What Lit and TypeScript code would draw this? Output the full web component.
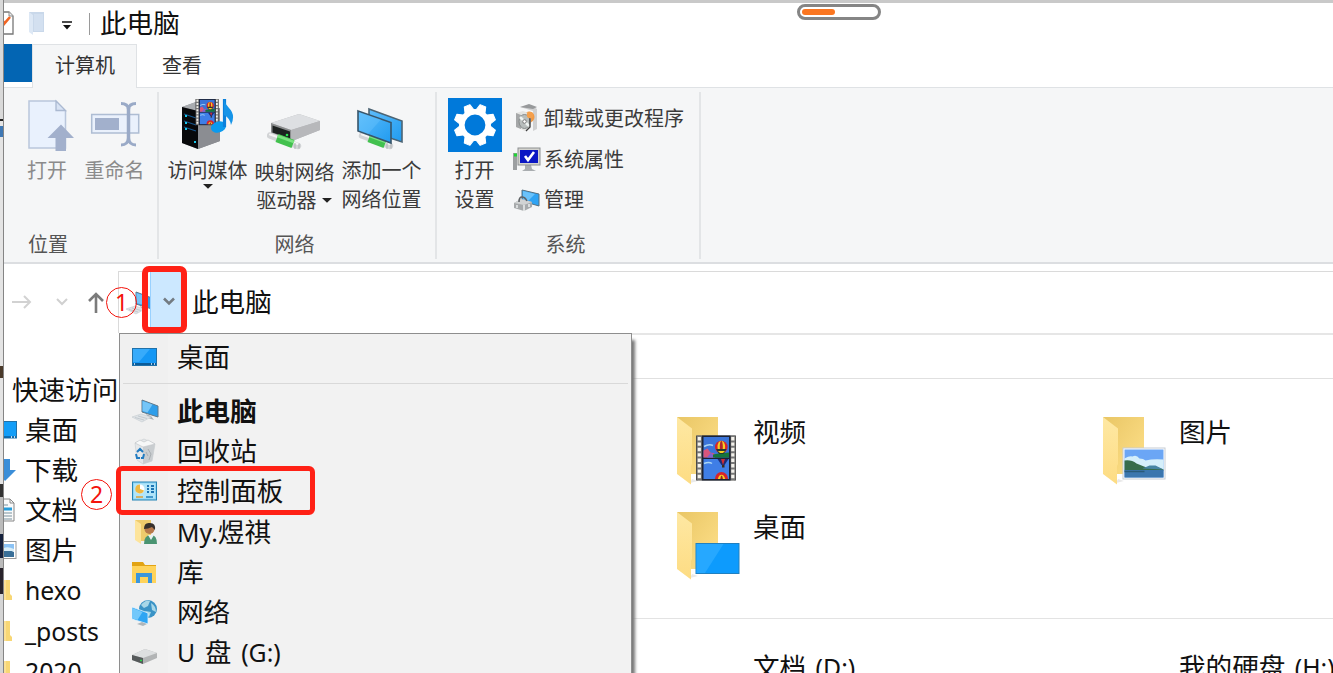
import { LitElement, html, css, svg, nothing } from "lit";
import { customElement, property } from "lit/decorators.js";

type Drawing = { w: number; h: number; art: unknown };

const film = (x: number, y: number, s: number) => svg`
  <g transform="translate(${x} ${y}) scale(${s})">
    <rect width="40" height="45" fill="#4b4b4b"/>
    <rect x="1" y="0" width="4.6" height="45" fill="#777"/><rect x="34.6" y="0" width="4.6" height="45" fill="#777"/>
    <path d="M3.3 1.5V45M36.8 1.5V45" stroke="#f4f2ec" stroke-width="3.2" stroke-dasharray="3.4 2"/>
    <rect x="6" y="0" width="28.500" height="45" fill="#1c2233"/>
    <rect x="7.500" y="1.500" width="25.500" height="20.500" fill="#3b74d8"/>
    <rect x="7.500" y="23.500" width="25.500" height="20" fill="#3f7ee6"/>
    <path d="M8 11q5-3 9-1M8 28q5-2 8 0" stroke="#a9d6f5" stroke-width="1.5" fill="none"/>
    <path d="M7.500 22V15l4-2 3 4 4 1v4z" fill="#d9567c"/><path d="M11 22l4-5 4 5z" fill="#7a63d0"/>
    <path d="M17 22v-3l6-1 10-1v5z" fill="#15753c"/>
    <circle cx="25.300" cy="11.500" r="6.300" fill="#d8232b"/><ellipse cx="25.300" cy="11.500" rx="3.800" ry="6.300" fill="#f6cf22"/><ellipse cx="25.300" cy="11.500" rx="1.500" ry="6.300" fill="#b2272a"/>
    <path d="M20 13.500h10.600l-3 5h-4.600z" fill="#263a31"/><path d="M22 15.500h7l-2 2h-3z" fill="#f6cf22"/>
    <path d="M21.500 23.500h11l-4 6h-3z" fill="#1d2a72"/><path d="M25 23.500h4l-2 6z" fill="#cf2d36"/><rect x="26" y="29.500" width="2.500" height="2.500" fill="#3d2b1c"/>
    <path d="M19 43.500a6.500 7 0 0 1 13 0z" fill="#d8232b"/><path d="M21.800 43.500a4 7 0 0 1 7.400 0z" fill="#f6cf22"/><path d="M24.300 43.500a1.500 7 0 0 1 2.600 0z" fill="#942526"/>
  </g>`;

const folder = svg`
  <defs>
    <linearGradient id="fb" x1="0" y1="0" x2="1" y2="1"><stop offset="0" stop-color="#e9c665"/><stop offset="1" stop-color="#ffe18b"/></linearGradient>
    <linearGradient id="ff" x1="0" y1="0" x2="0" y2="1"><stop offset="0" stop-color="#fee8a3"/><stop offset="1" stop-color="#fddc83"/></linearGradient>
  </defs>
  <path d="M14 67l8-2-6-2z" fill="#e9e9e9"/>
  <path d="M1 1H42V58H15z" fill="url(#fb)"/>
  <path d="M1 1L16 12.500V48l-1 2V68.500L1 58z" fill="url(#ff)"/>`;

const connector = svg`
  <path d="M2 4.500L30 15" stroke="#d2d4d6" stroke-width="6.400" stroke-linecap="round"/>
  <path d="M2 3.500L30 13" stroke="#f4f4f4" stroke-width="2" stroke-linecap="round"/>
  <path d="M9 7L25 13" stroke="#42c14e" stroke-width="8.500"/>
  <path d="M9.500 5L26 11" stroke="#7be281" stroke-width="2.500"/>
  <path d="M27 12v6M31 12.500v5" stroke="#aeb1b4" stroke-width="1"/>`;

const landscape = svg`
  <rect x=".5" y=".5" width="42" height="31" fill="#fff" stroke="#c6ccd3"/>
  <rect x="2" y="2" width="39" height="28" fill="#6ba6f5"/>
  <path d="M2 11q5-3 8-2 4-2 7 2 4 0 6 2 8-2 18-1v10H2z" fill="#d5effa"/>
  <path d="M2 13q7-1 12 3l10 4 9-1 8 3v1H2z" fill="#376c4b"/>
  <path d="M20 21l7-3h6l8 4z" fill="#4785a3"/>
  <rect x="2" y="22.500" width="39" height="7.500" fill="#3b76ae"/><path d="M2 24h20" stroke="#285a79" stroke-width="1.500"/>`;

const ICONS: Record<string, Drawing> = {
  sketch: { w: 14, h: 26, art: svg`<path d="M-6 1H5l4 4V23H-6z" fill="#fff" stroke="#777" stroke-width="1.300"/><path d="M5 1v4h4" fill="#eee" stroke="#888"/><path d="M-1 10l1 3 6-7" fill="none" stroke="#f26522" stroke-width="2.600"/>` },
  paleFolder: { w: 18, h: 25, art: svg`<path d="M1 1H16V21H5z" fill="#c9d8ea"/><path d="M1 1l4 3v20l-4-3z" fill="#dde8f5"/><path d="M6 3h9v17H6z" fill="#d3e0f0"/>` },
  openFile: { w: 48, h: 56, art: svg`
    <path d="M2 5H29L38.500 15V52H2z" fill="#e9f1fd" stroke="#b9c6dc" stroke-width="1.500"/><path d="M29 5v9.500h9.500z" fill="#d8e3f4" stroke="#aab9d1" stroke-width="1.300"/>
    <path d="M34 28.500L47 42H39V55H28.500V42H20.500z" fill="#a2b0cc"/>` },
  rename: { w: 50, h: 56, art: svg`
    <rect x="1.700" y="18.500" width="47" height="18.500" fill="#eaf1fc" stroke="#aebdd3" stroke-width="1.500"/><rect x="5" y="22" width="24" height="12" fill="#a2b0cc"/>
    <path d="M31 7.500q7 0 7.500 6V42q-.5 7-7.500 7M46 7.500q-7 0-7.500 6V42q.5 7 7.500 7" fill="none" stroke="#9aaac7" stroke-width="3"/><path d="M38.500 12V44" stroke="#9aaac7" stroke-width="3.500"/>` },
  media: { w: 54, h: 56, art: svg`
    <path d="M1 11L15 6 39 13V45L17 53 1 47z" fill="#85888e"/><path d="M1 11L15 6 30 9 17 15z" fill="#aaadb1"/><path d="M1 11L17 15V53L1 47z" fill="#08090b"/><path d="M17 15L39 12V45L17 53z" fill="#8b8d92"/>
    <path d="M3 18l12 4M3 25l12 4M3 31l12 4" stroke="#17568d" stroke-width="1.200"/><path d="M4 20h2M4 27h2M4 33h2M13 46h2" stroke="#17c8eb" stroke-width="1.800"/>
    ${film(14.5, 3, 0.58)}
    <ellipse cx="37.500" cy="31" rx="7.700" ry="5.500" fill="#0b9aee" transform="rotate(-15 37.500 31)"/><path d="M43.500 31V3" stroke="#0b80db" stroke-width="3.200"/><path d="M43 3q1 5 5 9 7 7 2 17-1-7-7-10z" fill="#1594e8"/>` },
  drive: { w: 56, h: 56, art: svg`
    <path d="M4 27L32 18 53 25V34L25 45 4 37z" fill="#b4b6b9"/><path d="M4 27L32 18 53 25 24 34z" fill="#dddfe2"/><path d="M24 34L53 25V34L25 45z" fill="#b7b8bb"/><path d="M4 27L24 34V45L4 37z" fill="#8b8d8e"/><path d="M5.500 29.500L23 35.500V42.500L5.500 36.500z" fill="#1c2120"/><circle cx="20" cy="39" r="1.300" fill="#27e34f"/>
    <g transform="translate(1 35)">${connector}</g>` },
  netPlace: { w: 56, h: 56, art: svg`
    <defs><linearGradient id="np" x1="0" y1="0" x2="1" y2="1"><stop offset="0" stop-color="#5fbdfb"/><stop offset="1" stop-color="#209bf0"/></linearGradient></defs>
    <g transform="translate(6 35)">${connector}</g>
    <path d="M15 13L48 25V46L36 42V32L15 25z" fill="url(#np)" stroke="#4c6474" stroke-width="1.600"/><path d="M4 15L37 26.500V47L4 35z" fill="url(#np)" stroke="#38556a" stroke-width="1.600"/><path d="M5 16L27 23.500 14 38 5 34.500z" fill="#70c8ff" opacity=".35"/>` },
  gear: { w: 54, h: 54, art: svg`
    <rect width="54" height="54" fill="#0079da"/>
    <g transform="translate(27 27)">${[0, 1, 2, 3, 4, 5, 6, 7].map((i) => svg`<path d="M-4.600-15L-3-20.800H3L4.600-15z" fill="#fff" stroke="#fff" stroke-width="1" stroke-linejoin="round" transform="rotate(${22.5 + 45 * i})"/>`)}<circle r="13.200" fill="none" stroke="#fff" stroke-width="5.600"/></g>` },
  uninstall: { w: 28, h: 28, art: svg`
    <path d="M7 3l13-1 4 3v20l-4 2V7z" fill="#cfd0d1"/><path d="M7 3l9-3 8 3-4 2z" fill="#97999b"/><circle cx="16" cy="13" r="5.500" fill="#f19a45"/><path d="M3 9l7-2 8 3v14l-6 3-9-4z" fill="#e4e4e2"/><path d="M3 9v14l5 2V11z" fill="#a5a7a8"/>
    <ellipse cx="11.500" cy="17.500" rx="5.500" ry="7" fill="#b8bdbc" stroke="#858a8a"/><path d="M7 13l9 9" stroke="#eef3f1" stroke-width="2.500"/><circle cx="11.500" cy="17.500" r="1.800" fill="#fff" stroke="#777"/><path d="M17 12v11l-4 4" fill="none" stroke="#3f3f3f" stroke-width="1.300"/><circle cx="17" cy="11" r="3.200" fill="#f5a04c"/>` },
  sysprops: { w: 28, h: 28, art: svg`
    <path d="M0 8h4v17H0z" fill="#9c9fa1"/><path d="M1 10h3" stroke="#1ed534" stroke-width="3"/><path d="M12 20h6l1 4 4 2H9l3-2z" fill="#a9adb0"/><rect x="5" y="3" width="22" height="17" fill="#d4d4cf" stroke="#8d9092"/><rect x="7" y="5" width="18" height="13" fill="#0a17c4"/><path d="M12 11l3 4 6-8" fill="none" stroke="#fff" stroke-width="2.600"/>` },
  manage: { w: 28, h: 28, art: svg`
    <path d="M9 4L26 8V20L9 15z" fill="#2fa3f3" stroke="#567080"/><path d="M10 5l12 3-8 8-4-2z" fill="#6ac2fa"/><path d="M1 17l7-4 11 3v5l-8 4-10-3z" fill="#a7aaac"/><path d="M1 17l7-4 11 3-8 3z" fill="#d1d3d4"/><path d="M6 16q0-5 3-5t5 4" fill="none" stroke="#606467" stroke-width="1.600"/><path d="M11 19v6M4 19v3M16 18v3" stroke="#eceeee" stroke-width="1.500"/>` },
  pc: { w: 28, h: 28, art: svg`
    <path d="M11 3L27 9V20L11 15z" fill="#2e9eea" stroke="#62798a"/><path d="M11.500 4l10 3.500-5 8-5-1.500z" fill="#74c5f8"/><path d="M15 17l5 2 3 4-6-2z" fill="#a9afb3"/><path d="M1 20l9-3 10 3-9 5z" fill="#dfe3e6" stroke="#c5cbd0" stroke-width=".6"/><path d="M4 20.500l9 2.500M7 19l9 2.500" stroke="#b6bfc6" stroke-width=".7"/>` },
  desktop: { w: 28, h: 28, art: svg`
    <rect x="1.500" y="5.500" width="24" height="17" fill="#1497f5" stroke="#2071a9"/><path d="M2 6h17L8 19H2z" fill="#37abfb"/><path d="M2 21h23" stroke="#0a5b99" stroke-width="2"/><path d="M3 21h1M20 21h1M23 21h1" stroke="#e2f4ff" stroke-width="1.500"/>` },
  bin: { w: 28, h: 28, art: svg`
    <path d="M4 6l9-4 11 5-3 17-9 3-6-4z" fill="#e5e8ea" stroke="#cbd0d3" stroke-width=".7"/><path d="M12 10l12-3-3 17-9 3z" fill="#c9cdd0"/><path d="M4 6l5-3 4 2 4-2 7 4-12 3z" fill="#f7f8f8" stroke="#bdc1c4" stroke-width=".6"/><path d="M6 15l3-3 3 3M5 17l1 4h3M13 17l-1 4h-2" fill="none" stroke="#207bc1" stroke-width="2"/><path d="M17 12l3 5-2 6M15 15l2 4" stroke="#a9aeb2" fill="none"/>` },
  control: { w: 28, h: 28, art: svg`
    <rect x="1.500" y="5" width="24" height="18" fill="#8fd5f4" stroke="#2484b5"/><rect x="3" y="6.500" width="21" height="15" fill="#b1e5f9"/><circle cx="9" cy="12" r="4.500" fill="#fff"/><path d="M9 12V7.500a4.500 4.500 0 1 0 4 6z" fill="#efb842"/><path d="M16 9h2M20 9h3M16 12h2M20 12h3M16 15h2M20 15h3" stroke="#1e75b4" stroke-width="2"/><path d="M5 20h7" stroke="#dda03a" stroke-width="1.500"/><path d="M15 20h7" stroke="#2381bd" stroke-width="1.500"/>` },
  user: { w: 28, h: 28, art: svg`
    <path d="M4 2h16v21H9z" fill="#eecb6c"/><path d="M4 2l6 4v20l-6-4z" fill="#fde49b"/><path d="M13 26q0-9 7-9 6 0 6 9z" fill="#4a9471"/><path d="M17 17l3 5 3-5z" fill="#e9f2f1"/><circle cx="18.500" cy="11" r="5" fill="#b7794b"/><path d="M13 11q0-7 6-6 6 0 5 7l-3-3q-4 2-8 2z" fill="#36302c"/>` },
  library: { w: 28, h: 28, art: svg`
    <path d="M1 4h11l2 3h11v4H1z" fill="#e2a313"/><path d="M1 8h24v17H1z" fill="#ffd35a"/><path d="M5 25V15h16v10h-4v-6H9v6z" fill="#3b96dc"/>` },
  network: { w: 28, h: 28, art: svg`
    <circle cx="17" cy="11" r="9" fill="#3a93c6"/><path d="M10 7q5-6 9-4l-2 5-4 2zM20 5q5 3 5 9l-4-2zM14 13l6 1-2 5z" fill="#a7d7e8"/><path d="M1 9l16 6v11L1 21z" fill="#2fa5f3" stroke="#e6f4fc" stroke-width=".8"/><path d="M1.500 10l10 4-5 8-5-1.500z" fill="#72c8fb"/><path d="M6 26l5-2 5 2-4 2z" fill="#aeb6bb"/>` },
  usb: { w: 28, h: 28, art: svg`
    <path d="M1 17l13-6 12 4v5l-14 6-11-4z" fill="#b2b4b5"/><path d="M1 17l13-6 12 4-14 5z" fill="#dddfe0"/><path d="M1 17l11 3v6L1 22z" fill="#55595a"/><path d="M9 22.500h2" stroke="#29d64a" stroke-width="1.500"/>` },
  videoFolder: { w: 66, h: 72, art: svg`${folder}${film(20, 19.5, 1)}` },
  deskFolder: { w: 66, h: 72, art: svg`${folder}<rect x="20" y="32.500" width="43" height="30" fill="#0d9bfd" stroke="#2080c0"/><path d="M20.500 33h27L29 62h-8.500z" fill="#26a8ff"/>` },
  picFolder: { w: 66, h: 72, art: svg`${folder}<g transform="translate(20.500 31.500)">${landscape}</g>` },
  sideDesktop: { w: 14, h: 28, art: svg`<rect x="-4" y="5.500" width="16.500" height="16.500" fill="#139df7" stroke="#2071a9"/><path d="M-4 21h16" stroke="#0b5e9d" stroke-width="1.500"/><path d="M7 21h1M10 21h1" stroke="#fff" stroke-width="1.500"/>` },
  sideDown: { w: 14, h: 28, art: svg`<path d="M-5 3H6V14H12L1 25-8 14h3z" fill="#3b8ed8"/>` },
  sideDoc: { w: 14, h: 28, art: svg`<path d="M-5 3H6l4 4V25H-5z" fill="#fafafa" stroke="#888"/><path d="M6 3v4h4" fill="none" stroke="#888"/><path d="M0 9h4M0 17h8M0 20h8M0 23h8" stroke="#79929f"/><path d="M0 13h8" stroke="#279dda" stroke-width="3"/>` },
  sidePic: { w: 14, h: 28, art: svg`<rect x="-5" y="5.500" width="17" height="17" fill="#fff" stroke="#999"/><path d="M0 8h10v7H0z" fill="#8bc2f4"/><path d="M0 14q4-1 10 2v5H0z" fill="#396f98"/><path d="M0 12q4-2 10 1v2H0z" fill="#d9eef8"/>` },
  sideFolder: { w: 14, h: 28, art: svg`<path d="M-4 4H6V18l2 2v4H-4z" fill="#f8d775"/><path d="M-4 4h6v20h-6z" fill="#fce095"/>` },
  back: { w: 20, h: 16, art: svg`<path d="M0 8H18M12 2l6 6-6 6" fill="none" stroke="#d2d2d2" stroke-width="2"/>` },
  recent: { w: 12, h: 8, art: svg`<path d="M1 1l5 5 5-5" fill="none" stroke="#d0d0d0" stroke-width="2"/>` },
  up: { w: 18, h: 22, art: svg`<path d="M9 21V2M2 9l7-7 7 7" fill="none" stroke="#7b7b7b" stroke-width="2.600"/>` },
  chevron: { w: 12, h: 9, art: svg`<path d="M1 1.500l5 5 5-5" fill="none" stroke="#737b82" stroke-width="2.600"/>` },
  caret: { w: 10, h: 5, art: svg`<path d="M0 0h10L5 4.700z" fill="#222"/>` },
  overflow: { w: 10, h: 9, art: svg`<path d="M0 1h10" stroke="#111" stroke-width="1.500"/><path d="M1 4h8L5 8.500z" fill="#111"/>` },
};

@customElement("shell-icon")
class ShellIcon extends LitElement {
  @property() name = "";
  static styles = css`
    :host { display: block; flex: none; }
    svg { display: block; overflow: hidden; }
  `;
  render() {
    const d = ICONS[this.name];
    return html`<svg width=${d.w} height=${d.h} viewBox="0 0 ${d.w} ${d.h}">${d.art}</svg>`;
  }
}

const SIDE = [
  ["sideDesktop", "桌面"], ["sideDown", "下载"], ["sideDoc", "文档"], ["sidePic", "图片"],
  ["sideFolder", "hexo"], ["sideFolder", "_posts"], ["sideFolder", "2020"],
];
const MENU = [
  ["pc", "此电脑"], ["bin", "回收站"], ["control", "控制面板"], ["user", "My.煜祺"],
  ["library", "库"], ["network", "网络"], ["usb", "U 盘 (G:)"],
];

@customElement("app-root")
class AppRoot extends LitElement {
  static styles = css`
    :host {
      display: flex; position: relative; width: 1333px; height: 673px; overflow: hidden;
      background: #fff; color: #111;
      font: 26.600px/40px "Noto Sans", "Noto Sans CJK SC", sans-serif;
      white-space: nowrap;
    }
    * { box-sizing: border-box; }
    .edge {
      flex: none; width: 4px; border-right: 1.500px solid #858585;
      background: linear-gradient(#d9d9d9 119px, #222 119px 121px, #e6e6e6 121px 126px, #3f78b4 126px 137px, #e4e4e4 137px 366px, #4a3a2a 366px 378px, #e4e4e4 378px 484px, #333 484px 497px, #bbb 497px 534px, #15203c 534px 558px, #bbb 558px 568px, #28232b 568px 594px, #d5d5d5 594px);
    }
    .window { flex: 1; min-width: 0; display: flex; flex-direction: column; }
    .title { height: 44px; flex: none; border-top: 3px solid #c9c9c9; display: flex; align-items: center; }
    .title .folder { margin-left: 10px; }
    .title .more { margin: 3px 0 0 16px; }
    .title .bar { width: 1px; height: 22px; background: #9a9a9a; margin: 0 10px 0 17px; }
    .title span { padding-bottom: 2px; }
    .tabs { height: 44px; flex: none; display: flex; font-size: 20px; line-height: 42px; color: #333; border-bottom: 1px solid #dfe2e5; }
    .file { width: 28px; height: 38px; background: #0365b3; }
    .tab { width: 105px; height: 44px; background: #f5f6f7; border: 1px solid #dfe2e5; border-bottom: 0; padding-left: 22px; }
    .view { padding-left: 25px; line-height: 44px; }
    .ribbon { height: 176px; flex: none; display: flex; background: #f5f6f7; border-bottom: 2px solid #dcdee1; padding-top: 4px; font-size: 20px; line-height: 29px; color: #3b3b3b; }
    .group { height: 167px; border-right: 2px solid #e3e5e7; display: flex; flex-direction: column; }
    .tools { height: 139px; display: flex; padding-top: 4px; }
    .caption { color: #555; text-align: center; }
    .place { width: 155px; padding-left: 13px; }
    .place .caption { text-align: left; padding-left: 11px; }
    .place .narrow shell-icon { padding-left: 8px; }
    .net { width: 278px; padding-left: 5px; }
    .net .caption { padding-right: 10px; }
    .system { width: 264px; padding-left: 8px; }
    .system .caption { padding-right: 13px; }
    .tool { width: 87px; display: flex; flex-direction: column; align-items: center; }
    .tool shell-icon { height: 60px; }
    .off { color: #8b8b8b; }
    .narrow { width: 60px; } .mid { width: 75px; }
    .settings { width: 59px; padding-top: 2px; }
    .settings shell-icon { height: 58px; }
    .tool .drop { height: 5px; margin-top: -1px; }
    .low .lines { padding-top: 3px; line-height: 28px; }
    .inline { display: flex; align-items: center; gap: 5px; padding-left: 2px; }
    .inline .drop { height: 5px; }
    .list { padding: 2px 0 0 9px; }
    .entry { height: 40.800px; display: flex; align-items: center; gap: 3px; }
    .address { height: 69px; flex: none; display: flex; padding-top: 7px; }
    .nav { width: 114px; display: flex; align-items: center; padding-left: 8px; }
    .nav .rec { margin-left: 24px; } .nav .up { margin: 2px 0 0 19px; }
    .box { flex: 1; border: 1px solid #dadada; border-width: 1px 0 0 1px; display: flex; }
    .box .pc { margin: 17px 0 0 6px; width: 25px; }
    .split { width: 36px; height: 58px; background: #cce8ff; border-left: 1px solid #99d1ff; display: flex; align-items: center; justify-content: center; }
    .path { line-height: 60px; padding-left: 6px; }
    .body { flex: 1; min-height: 0; display: flex; }
    .side { width: 115px; overflow: hidden; padding-top: 37px; flex: none; }
    .quick { padding-left: 8px; }
    .node { display: flex; align-items: center; height: 40.100px; }
    .node span { padding-left: 7px; }
    .latin { font-size: 24.800px; }
    .content { flex: 1; border-top: 2px solid #e6e6e6; padding-left: 512px; }
    .head { height: 44px; border-bottom: 1px solid #e0e0e0; }
    .grid { height: 240px; padding: 37px 0 0 45px; border-bottom: 1px solid #e3e3e3; display: grid; grid-template-columns: 426px 1fr; grid-auto-rows: 95px; }
    .tile { display: flex; gap: 11px; line-height: 33px; }
    .drives { display: grid; grid-template-columns: 426px 1fr; padding: 28px 0 0 122px; word-spacing: 2.500px; }
    .menu { position: absolute; left: 119px; top: 333px; width: 513px; height: 350px; background: linear-gradient(90deg, #f0f0f0 48px, #f2f2f2 48px); border: 1px solid #8e8e8e; box-shadow: 4px 6px 3px -1px #777; padding-top: 2px; }
    .row { height: 40.200px; display: flex; align-items: center; padding-left: 11px; gap: 18px; word-spacing: 2.800px; }
    .row.top { height: 41px; }
    .rule { height: 1px; background: #d9d9d9; margin: 6px 3px 7px; }
    .bold { font-weight: 700; }
    .mark { position: absolute; border: 5px solid #ff2116; border-radius: 6px; }
    .m1 { left: 142px; top: 266px; width: 45px; height: 67px; border-width: 6px; border-radius: 7px; }
    .m2 { left: 116px; top: 466px; width: 199px; height: 49px; }
    .num { position: absolute; width: 31px; height: 31px; border: 1.500px solid #f4130b; border-radius: 50%; color: #f4130b; font-size: 23px; line-height: 28px; text-align: center; }
    .n1 { left: 106px; top: 287px; } .n2 { left: 81px; top: 479px; }
    .pill { position: absolute; left: 797px; top: 4px; width: 84px; height: 16px; border: 3px solid #858585; border-radius: 8px; padding: 2px; }
    .fill { width: 33px; height: 6px; border-radius: 3px; background: #fb7620; }
  `;

  render() {
    return html`
      <div class="edge"></div>
      <div class="window">
        <div class="title">
          <shell-icon name="sketch"></shell-icon><shell-icon class="folder" name="paleFolder"></shell-icon>
          <shell-icon class="more" name="overflow"></shell-icon><div class="bar"></div><span>此电脑</span>
        </div>
        <div class="tabs"><div class="file"></div><div class="tab">计算机</div><div class="view">查看</div></div>
        <div class="ribbon">
          <div class="group place">
            <div class="tools off">
              <div class="tool narrow"><shell-icon name="openFile"></shell-icon>打开</div>
              <div class="tool mid"><shell-icon name="rename"></shell-icon>重命名</div>
            </div>
            <div class="caption">位置</div>
          </div>
          <div class="group net">
            <div class="tools">
              <div class="tool"><shell-icon name="media"></shell-icon>访问媒体<shell-icon class="drop" name="caret"></shell-icon></div>
              <div class="tool low"><shell-icon name="drive"></shell-icon><div class="lines">映射网络<div class="inline">驱动器<shell-icon class="drop" name="caret"></shell-icon></div></div></div>
              <div class="tool"><shell-icon name="netPlace"></shell-icon><div>添加一个<br>网络位置</div></div>
            </div>
            <div class="caption">网络</div>
          </div>
          <div class="group system">
            <div class="tools">
              <div class="tool settings"><shell-icon name="gear"></shell-icon><div>打开<br>设置</div></div>
              <div class="list">
                ${[["uninstall", "卸载或更改程序"], ["sysprops", "系统属性"], ["manage", "管理"]].map(([i, t]) => html`<div class="entry"><shell-icon name=${i}></shell-icon>${t}</div>`)}
              </div>
            </div>
            <div class="caption">系统</div>
          </div>
        </div>
        <div class="address">
          <div class="nav"><shell-icon name="back"></shell-icon><shell-icon class="rec" name="recent"></shell-icon><shell-icon class="up" name="up"></shell-icon></div>
          <div class="box"><shell-icon class="pc" name="pc"></shell-icon><div class="split"><shell-icon name="chevron"></shell-icon></div><div class="path">此电脑</div></div>
        </div>
        <div class="body">
          <div class="side">
            <div class="quick">快速访问</div>
            ${SIDE.map(([i, t], n) => html`<div class="node"><shell-icon name=${i}></shell-icon><span class=${n > 3 ? "latin" : ""}>${t}</span></div>`)}
          </div>
          <div class="content">
            <div class="head"></div>
            <div class="grid">
              ${[["videoFolder", "视频"], ["picFolder", "图片"], ["deskFolder", "桌面"]].map(([i, t]) => html`<div class="tile"><shell-icon name=${i}></shell-icon>${t}</div>`)}
            </div>
            <div class="drives"><span>文档 <span class="latin">(D:)</span></span><span>我的硬盘 <span class="latin">(H:)</span></span></div>
          </div>
        </div>
      </div>
      <div class="menu">
        <div class="row top"><shell-icon name="desktop"></shell-icon>桌面</div>
        <div class="rule"></div>
        ${MENU.map(([i, t], n) => html`<div class="row ${n === 0 ? "bold" : ""}"><shell-icon name=${i}></shell-icon>${/[A-Z]/.test(t) ? html`<span>${t.split(/([A-Za-z.():]+)/).map((p) => (/[A-Z]/.test(p) ? html`<span class="latin">${p}</span>` : p || nothing))}</span>` : t}</div>`)}
      </div>
      <div class="mark m1"></div><div class="mark m2"></div>
      <div class="num n1">1</div><div class="num n2">2</div>
      <div class="pill"><div class="fill"></div></div>
    `;
  }
}
